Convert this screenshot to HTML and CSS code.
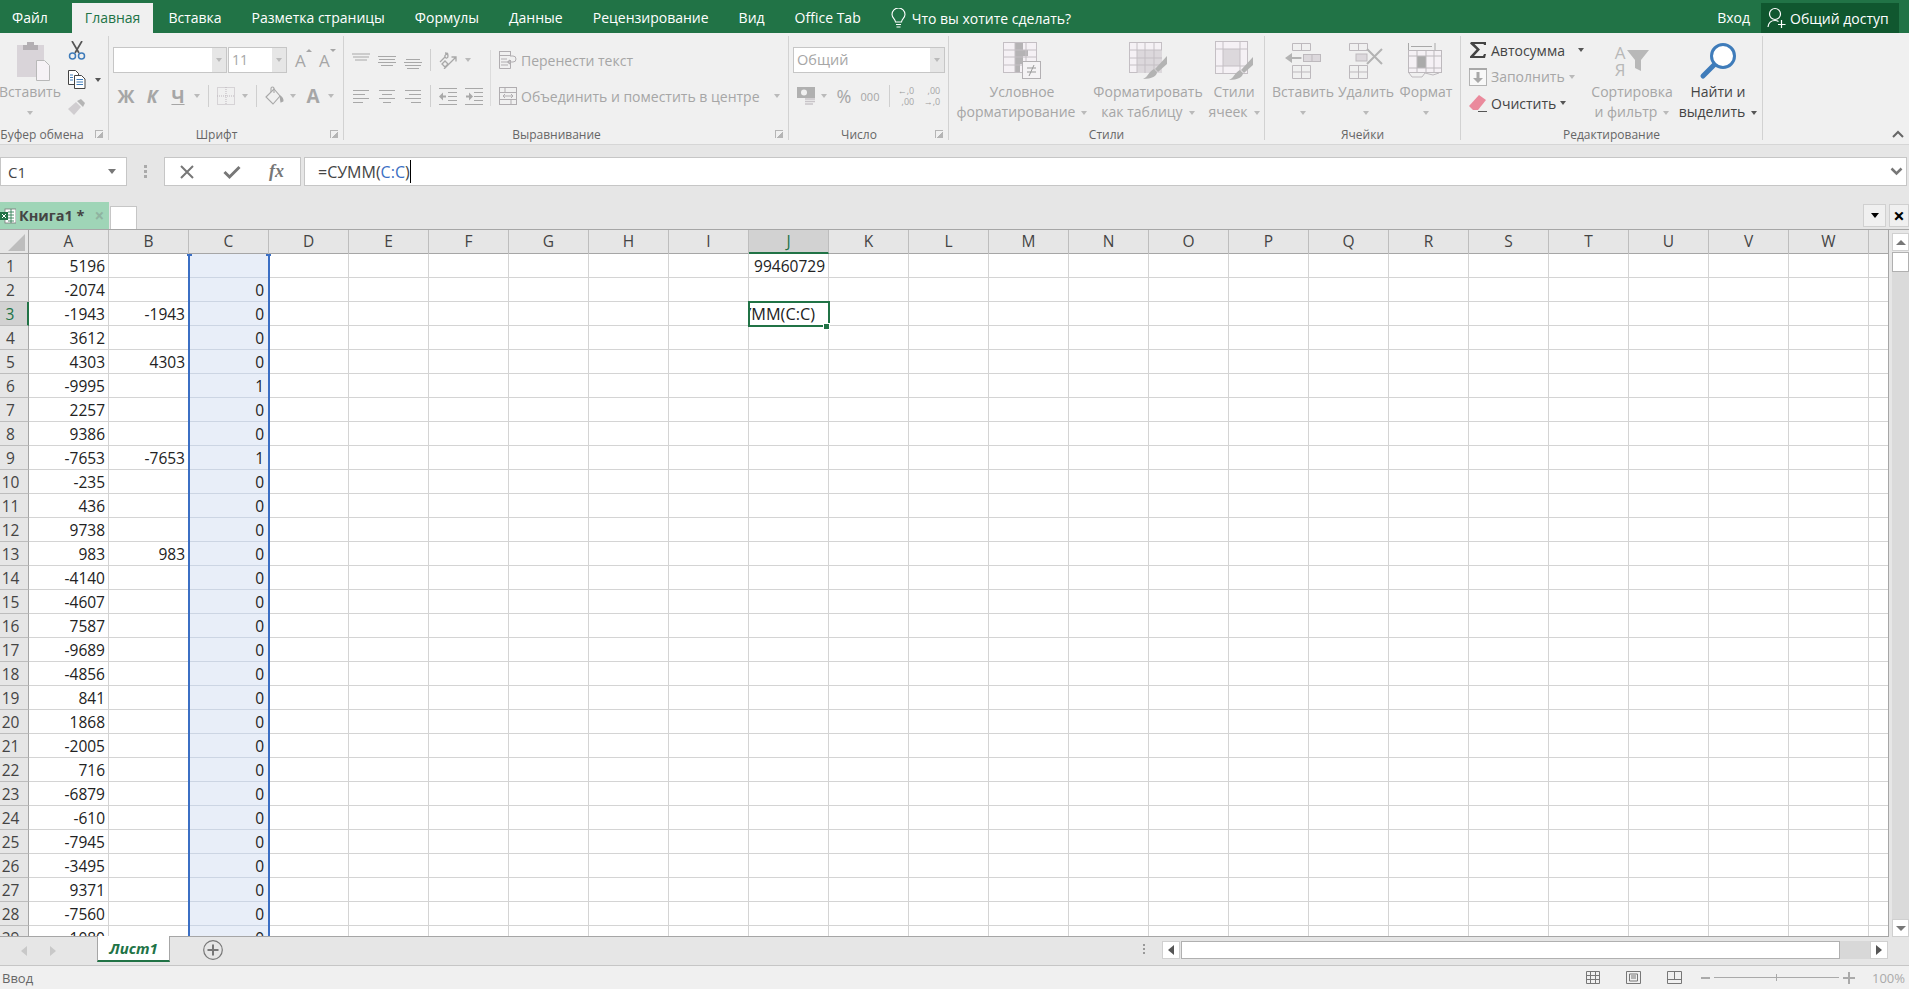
FILE: index.html
```
<!DOCTYPE html>
<html>
<head>
	<meta charset="utf-8">
	<title>Книга1 - Excel</title>
	<link rel="stylesheet" href="styles.css">
</head>
<body>
	<div class="titlebar">
		<div class="tab tab-file">Файл</div>
		<div class="tab tab-on">Главная</div>
		<div class="tab">Вставка</div>
		<div class="tab">Разметка страницы</div>
		<div class="tab">Формулы</div>
		<div class="tab">Данные</div>
		<div class="tab">Рецензирование</div>
		<div class="tab">Вид</div>
		<div class="tab">Office Tab</div>
		<div class="tellme">
			<svg width="15" height="21" viewBox="0 0 15 21" fill="none" stroke="#fff" stroke-width="1.1"><path d="M4.5 14c0-3-3.500-4-3.500-7.500a6.500 6.500 0 0 1 13 0c0 3.500-3.500 4.500-3.500 7.500z"/><path d="M5 16.500h5M5.500 19h4"/></svg>
			<span>Что вы хотите сделать?</span>
		</div>
		<div class="login">Вход</div>
		<div class="share">
			<svg width="19" height="22" viewBox="0 0 19 22" fill="none" stroke="#fff" stroke-width="1.2"><circle cx="8" cy="7" r="5.500"/><path d="M1 20c.5-4 3-6.500 7-6.500 1.500 0 2.500.3 3.500 1M14.500 13v8M11 17.500h7.500"/></svg>
			<span>Общий доступ</span>
		</div>
	</div>

	<div class="ribbon">
		<div class="group g-clip">
			<div class="group-body">
				<div class="big big-paste">
					<div class="big-ico">
						<svg width="34" height="40" viewBox="0 0 34 40"><rect y="4" width="27" height="32" fill="#d9d4d9"/><path d="M6 4h4V1h7v3h4v5H6z" fill="#b3afb3"/><path d="M19.500 19.500h8l5 5v15h-13z" fill="#f6f2f6" stroke="#b8b8b8"/></svg>
					</div>
					<div class="big-txt">Вставить</div>
					<div class="big-txt"><span class="arr"></span></div>
				</div>
				<div class="clip-col">
					<svg width="18" height="19" viewBox="0 0 18 19" fill="none"><path d="M4 0l7 12M14 0L7 12" stroke="#555" stroke-width="1.700"/><circle cx="4.500" cy="15" r="3" stroke="#3f7cba" stroke-width="1.500"/><circle cx="13.500" cy="15" r="3" stroke="#3f7cba" stroke-width="1.500"/></svg>
					<div class="clip-copy">
						<svg width="18" height="19" viewBox="0 0 18 19"><path d="M.5.500h7l3 3v11H.5z" fill="#fff" stroke="#444"/><path d="M6.500 5.500h7l3.500 3.500v9.500H6.500z" fill="#fff" stroke="#444"/><path d="M2 5h3M2 7.500h3M2 10h3M8.500 9.500h6.500M8.500 12h6.500M8.500 14.500h6.500" stroke="#3f7cba"/></svg>
						<span class="arr arr-dark"></span>
					</div>
					<svg width="18" height="17" viewBox="0 0 18 17"><path d="M0 10l8-7 5 5-7 8z" fill="#d0cdd0"/><path d="M9 2l4-2 4 4-2 4z" fill="#b5b5b5"/></svg>
				</div>
			</div>
			<div class="group-label">Буфер обмена<span class="launch"></span></div>
		</div>

		<div class="group g-font">
			<div class="group-body col">
				<div class="r1 font-r1">
					<div class="combo combo-name"><span class="combo-txt"></span><span class="combo-drop"><span class="arr"></span></span></div>
					<div class="combo combo-size"><span class="combo-txt">11</span><span class="combo-drop"><span class="arr"></span></span></div>
					<div class="grow-a">A<span class="up"></span></div>
					<div class="grow-a">A<span class="down"></span></div>
				</div>
				<div class="r2 font-r2">
					<b class="fmt">Ж</b>
					<b class="fmt fmt-i">К</b>
					<b class="fmt fmt-u">Ч</b>
					<span class="arr"></span>
					<span class="vsep"></span>
					<svg width="18" height="18" viewBox="0 0 18 18" fill="none" stroke="#bdb7bd" stroke-dasharray="1 1"><rect x=".5" y=".5" width="17" height="17"/><path d="M9 0v18M0 9h18"/></svg>
					<span class="arr"></span>
					<span class="vsep"></span>
					<svg width="20" height="20" viewBox="0 0 20 20" fill="none" stroke="#a8a8a8" stroke-width="1.100"><path d="M1 11l8-8 6 7-7 8z"/><path d="M6 6V2.500a1.500 1.500 0 0 1 3 0V7"/><path d="M15 10c2 1 3 3 3 5l-2 1z" fill="#a8a8a8"/></svg>
					<span class="arr"></span>
					<b class="fmt fmt-a">A</b>
					<span class="arr"></span>
				</div>
			</div>
			<div class="group-label">Шрифт<span class="launch"></span></div>
		</div>

		<div class="group g-align">
			<div class="group-body">
				<div class="align-left">
					<div class="r1 tools">
						<svg class="ic" viewBox="0 0 18 18"><path d="M0 3h18M1 6h16M3 9h12" stroke="#a8a8a8"/></svg>
						<svg class="ic" viewBox="0 0 18 18"><path d="M0 5.500h18M1 8.500h16M0 11.500h18M3 14.500h12" stroke="#a8a8a8"/></svg>
						<svg class="ic" viewBox="0 0 18 18"><path d="M2 8.500h14M0 11.500h18M1 14.500h16M3 17.500h12" stroke="#a8a8a8"/></svg>
						<span class="vsep"></span>
						<svg class="ic" viewBox="0 0 18 18" fill="none" stroke="#a8a8a8" stroke-width="1.300"><path d="M1 11l5-5M3 13l3-3 3 3-3 3zM6 2c2 0 3 1 3 3s-2 3-3 1 2-3 3-4"/><path d="M5 18L17 6M12.500 6H17v4.500"/></svg>
						<span class="arr"></span>
					</div>
					<div class="r2 tools">
						<svg class="ic" viewBox="0 0 18 18"><path d="M1 3.500h16M1 7.500h12M1 11.500h16M1 15.500h10" stroke="#a8a8a8"/></svg>
						<svg class="ic" viewBox="0 0 18 18"><path d="M1 3.500h16M4 7.500h10M1 11.500h16M5 15.500h8" stroke="#a8a8a8"/></svg>
						<svg class="ic" viewBox="0 0 18 18"><path d="M1 3.500h16M5 7.500h12M1 11.500h16M7 15.500h10" stroke="#a8a8a8"/></svg>
						<span class="vsep"></span>
						<svg class="ic" viewBox="0 0 18 18"><path d="M0 1.500h18M9 5.500h9M9 9.500h9M9 13.500h9M0 17.500h18" stroke="#a8a8a8"/><path d="M0 9.500l4-4v3h3v2H4v3z" fill="#a8a8a8"/></svg>
						<svg class="ic" viewBox="0 0 18 18"><path d="M0 1.500h18M9 5.500h9M9 9.500h9M9 13.500h9M0 17.500h18" stroke="#a8a8a8"/><path d="M8 9.500l-4-4v3H1v2h3v3z" fill="#a8a8a8"/></svg>
					</div>
				</div>
				<div class="align-right">
					<div class="r1 txt-tool">
						<svg class="ic" viewBox="0 0 18 18" fill="none" stroke="#b0adb0"><rect x=".5" y=".5" width="11" height="4"/><path d="M.5 4.500v13h11V9M2 8h6M2 11h7M2 14h7M11 5h3a3 3 0 0 1 0 6h-4"/><path d="M11 9l-2 2 2 2" stroke-width="1.400"/></svg>
						<span>Перенести текст</span>
					</div>
					<div class="r2 txt-tool">
						<svg class="ic" viewBox="0 0 18 18" fill="none" stroke="#b0adb0"><rect x=".5" y=".5" width="17" height="17"/><path d="M0 5.500h18M0 12.500h18M6 .5v5M12 12.500v5M4 9h10M6 7L4 9l2 2M12 7l2 2-2 2"/></svg>
						<span>Объединить и поместить в центре</span>
						<span class="arr arr-merge"></span>
					</div>
				</div>
			</div>
			<div class="group-label">Выравнивание<span class="launch"></span></div>
		</div>

		<div class="group g-num">
			<div class="group-body col">
				<div class="r1 num-r1">
					<div class="combo combo-num"><span class="combo-txt">Общий</span><span class="combo-drop"><span class="arr"></span></span></div>
				</div>
				<div class="r2 num-r2">
					<svg width="20" height="20" viewBox="0 0 20 20"><rect x="1" y="1" width="18" height="11" fill="#b0b0b0"/><circle cx="8" cy="6.500" r="3" fill="#f0f0f0"/><path d="M9 13h10M9 15.500h10M9 18h8" stroke="#c8c4c8" stroke-width="1.500"/></svg>
					<span class="arr"></span>
					<span class="pct">%</span>
					<span class="thou">000</span>
					<span class="vsep"></span>
					<span class="dec"><span><i>←</i>,0</span><span>,00</span></span>
					<span class="dec"><span>,00</span><span><i>→</i>,0</span></span>
				</div>
			</div>
			<div class="group-label">Число<span class="launch"></span></div>
		</div>

		<div class="group g-styles">
			<div class="group-body">
				<div class="big big-cf">
					<div class="big-ico">
						<svg width="38" height="37" viewBox="0 0 38 37" fill="none"><rect x=".5" y=".5" width="33" height="30" fill="#f5f1f5" stroke="#c4bfc4"/><path d="M12 1h8v7h5v6h-5v8h-3v8h-5z" fill="#b5b3b5"/><path d="M0 8h34M0 15h34M0 23h34M12 0v31M23 0v31" stroke="#c4bfc4"/><rect x="19.500" y="19.500" width="18" height="17" fill="#f5f3f5" stroke="#b3b0b3"/><path d="M24 26h9M24 30h9M31 23l-5 11" stroke="#999"/></svg>
					</div>
					<div class="big-txt">Условное</div>
					<div class="big-txt">форматирование<span class="arr arr-in"></span></div>
				</div>
				<div class="big big-ft">
					<div class="big-ico">
						<svg width="38" height="37" viewBox="0 0 38 37" fill="none"><rect x=".5" y=".5" width="32" height="30" fill="#f5f1f5" stroke="#c4bfc4"/><rect x="8" y="8" width="25" height="23" fill="#dcd8dc"/><path d="M0 8h33M0 16h33M0 23h33M8 0v31M16 0v31M25 0v31" stroke="#c4bfc4"/><path d="M38 14v8l-9 8-3-3z" fill="#b3b3b3"/><path d="M25 27l3 3c0 4-5 7-14 7 5-2 6-8 11-10z" fill="#b3b3b3"/></svg>
					</div>
					<div class="big-txt">Форматировать</div>
					<div class="big-txt">как таблицу<span class="arr arr-in"></span></div>
				</div>
				<div class="big big-cs">
					<div class="big-ico">
						<svg width="38" height="39" viewBox="0 0 38 39" fill="none"><rect x=".5" y=".5" width="32" height="32" fill="#f5f1f5" stroke="#c4bfc4"/><rect x="8" y="8" width="17" height="17" fill="#dcd8dc"/><path d="M0 8h33M0 25h33M8 0v33M25 0v33" stroke="#c4bfc4"/><path d="M38 16v8l-9 8-3-3z" fill="#b3b3b3"/><path d="M25 29l3 3c0 4-5 7-14 7 5-2 6-8 11-10z" fill="#b3b3b3"/></svg>
					</div>
					<div class="big-txt">Стили</div>
					<div class="big-txt">ячеек<span class="arr arr-in"></span></div>
				</div>
			</div>
			<div class="group-label">Стили</div>
		</div>

		<div class="group g-cells">
			<div class="group-body">
				<div class="big big-c1">
					<div class="big-ico">
						<svg width="36" height="36" viewBox="0 0 36 36" fill="none"><path d="M7.500.5h18v7h-18zM16.500.5v7M7.500 22.500h18v13h-18zM7.500 29h18M16.500 22.500v13" stroke="#bdb9bd"/><rect x="18.500" y="11.500" width="17" height="7" fill="#dcd8dc" stroke="#bdb9bd"/><path d="M27 11v8M3 15h14" stroke="#bdb9bd"/><path d="M0 15l7-5v10z" fill="#b3b3b3"/><path d="M4 14h12v2H4z" fill="#b3b3b3"/></svg>
					</div>
					<div class="big-txt">Вставить</div>
					<div class="big-txt"><span class="arr"></span></div>
				</div>
				<div class="big big-c2">
					<div class="big-ico">
						<svg width="36" height="36" viewBox="0 0 36 36" fill="none"><path d="M1.500.5h18v7h-18zM10.500.5v7M1.500 22.500h18v13h-18zM1.500 29h18M10.500 22.500v13" stroke="#bdb9bd"/><rect x="8" y="11" width="11" height="7" fill="#dcd8dc" stroke="#bdb9bd"/><path d="M19 6l15 15M34 6L19 21" stroke="#b3b3b3" stroke-width="2"/></svg>
					</div>
					<div class="big-txt">Удалить</div>
					<div class="big-txt"><span class="arr"></span></div>
				</div>
				<div class="big big-c3">
					<div class="big-ico">
						<svg width="36" height="36" viewBox="0 0 36 36" fill="none"><path d="M.5 0v7M27 0v7M3 3.500h21" stroke="#a8a8a8"/><rect x=".5" y="7.500" width="33" height="22" fill="#f5f1f5" stroke="#bdb9bd"/><rect x="9" y="13" width="9" height="12" fill="#aaa"/><path d="M0 13h34M0 25h34M9 7v23M18 7v23M26 7v23M1 30l3 4h10l3-4 8 2 6-2" stroke="#bdb9bd"/></svg>
					</div>
					<div class="big-txt">Формат</div>
					<div class="big-txt"><span class="arr"></span></div>
				</div>
			</div>
			<div class="group-label">Ячейки</div>
		</div>

		<div class="group g-edit">
			<div class="group-body">
				<div class="edit-col">
					<div class="edit-row on">
						<svg class="ic" viewBox="0 0 18 18"><path d="M2 1h15v3h-2l-.5-1H5.500L11 8.500 5 15h9l1-2h2l-1 4H1v-1.500l6.500-7L1 2.500z" fill="#444"/></svg>
						<span>Автосумма</span><span class="arr arr-dark arr-sum"></span>
					</div>
					<div class="edit-row">
						<svg class="ic" viewBox="0 0 18 18"><rect x=".5" y=".5" width="17" height="17" fill="#f8f8f8" stroke="#b3b3b3"/><path d="M0 1h18" stroke="#a8a8a8" stroke-width="2"/><path d="M7.500 4h3v6H14l-5 5-5-5h3.500z" fill="#a8a8a8"/></svg>
						<span>Заполнить</span><span class="arr"></span>
					</div>
					<div class="edit-row on">
						<svg class="ic" viewBox="0 0 18 18"><path d="M0 12L10 1l7 5-8 10H4z" fill="#ea8a9c"/><path d="M9 17.500h9" stroke="#555"/></svg>
						<span>Очистить</span><span class="arr arr-dark"></span>
					</div>
				</div>
				<div class="big big-sort">
					<div class="big-ico">
						<div class="sort-ico">
							<div class="sort-letters"><span>А</span><span>Я</span></div>
							<svg width="22" height="21" viewBox="0 0 22 21"><path d="M0 0h22l-8 10v11l-6-3v-8z" fill="#b8b8b8"/></svg>
						</div>
					</div>
					<div class="big-txt">Сортировка</div>
					<div class="big-txt">и фильтр<span class="arr arr-in"></span></div>
				</div>
				<div class="big big-find on">
					<div class="big-ico">
						<svg width="38" height="38" viewBox="0 0 38 38" fill="none"><circle cx="24" cy="14" r="11.500" fill="#fff" stroke="#3f7cba" stroke-width="3"/><path d="M15 23L4 34" stroke="#3f7cba" stroke-width="5" stroke-linecap="round"/></svg>
					</div>
					<div class="big-txt">Найти и</div>
					<div class="big-txt">выделить<span class="arr arr-dark arr-in"></span></div>
				</div>
			</div>
			<div class="group-label">Редактирование</div>
		</div>

		<div class="collapse">
			<svg width="12" height="8" viewBox="0 0 12 8" fill="none" stroke="#666" stroke-width="2"><path d="M1 7l5-5 5 5"/></svg>
		</div>
	</div>

	<div class="formulabar">
		<div class="namebox"><span>C1</span><span class="arr arr-name"></span></div>
		<div class="dots"><i></i><i></i><i></i></div>
		<div class="fx-btns">
			<svg width="16" height="16" viewBox="0 0 16 16" fill="none" stroke="#777" stroke-width="2"><path d="M2 2l12 12M14 2L2 14"/></svg>
			<svg width="18" height="16" viewBox="0 0 18 16" fill="none" stroke="#777" stroke-width="3"><path d="M1.500 8l5 5L16.500 3"/></svg>
			<span class="fx-label">fx</span>
		</div>
		<div class="fx-input">
			<span>=СУММ(<span class="ref">C:C</span>)</span><span class="caret"></span>
			<svg class="fx-chev" width="13" height="9" viewBox="0 0 13 9" fill="none" stroke="#777" stroke-width="2.500"><path d="M1.500 1.500l5 5 5-5"/></svg>
		</div>
	</div>

	<div class="booktabs">
		<div class="book">
			<svg width="16" height="16" viewBox="0 0 16 16"><rect x="5" y="1" width="11" height="14" fill="#fff" stroke="#777" stroke-width=".8"/><path d="M8 4h6M8 7h6M8 10h6M8 13h6M11 1v14" stroke="#217346" stroke-width=".8"/><rect y="4" width="8" height="8" fill="#217346"/><path d="M2 6l4 4M6 6l-4 4" stroke="#fff"/></svg>
			<span class="book-name">Книга1 *</span>
			<span class="book-x">×</span>
		</div>
		<div class="book-new"></div>
		<div class="book-tools">
			<div class="book-btn"><span class="arr arr-black"></span></div>
			<div class="book-btn book-close">×</div>
		</div>
	</div>

	<div class="sheetarea">
		<div class="grid">
			<div class="head">
				<div class="corner"><svg width="17" height="17" viewBox="0 0 17 17"><path d="M17 0v17H0z" fill="#bdbdbd"/></svg></div>
				<div class="hc">A</div><div class="hc">B</div><div class="hc">C</div><div class="hc">D</div><div class="hc">E</div><div class="hc">F</div><div class="hc">G</div><div class="hc">H</div><div class="hc">I</div><div class="hc hc-on">J</div><div class="hc">K</div><div class="hc">L</div><div class="hc">M</div><div class="hc">N</div><div class="hc">O</div><div class="hc">P</div><div class="hc">Q</div><div class="hc">R</div><div class="hc">S</div><div class="hc">T</div><div class="hc">U</div><div class="hc">V</div><div class="hc">W</div><div class="hc"></div>
			</div>
			<div class="rows">
				<div class="row"><div class="rh">1</div><div class="c">5196</div><div class="c"></div><div class="c cs cs-top"></div><div class="c cj">99460729</div></div>
				<div class="row"><div class="rh">2</div><div class="c">-2074</div><div class="c"></div><div class="c cs">0</div></div>
				<div class="row"><div class="rh rh-on">3</div><div class="c">-1943</div><div class="c">-1943</div><div class="c cs">0</div><div class="c cj active"><span>=СУММ(C:C)</span></div></div>
				<div class="row"><div class="rh">4</div><div class="c">3612</div><div class="c"></div><div class="c cs">0</div></div>
				<div class="row"><div class="rh">5</div><div class="c">4303</div><div class="c">4303</div><div class="c cs">0</div></div>
				<div class="row"><div class="rh">6</div><div class="c">-9995</div><div class="c"></div><div class="c cs">1</div></div>
				<div class="row"><div class="rh">7</div><div class="c">2257</div><div class="c"></div><div class="c cs">0</div></div>
				<div class="row"><div class="rh">8</div><div class="c">9386</div><div class="c"></div><div class="c cs">0</div></div>
				<div class="row"><div class="rh">9</div><div class="c">-7653</div><div class="c">-7653</div><div class="c cs">1</div></div>
				<div class="row"><div class="rh">10</div><div class="c">-235</div><div class="c"></div><div class="c cs">0</div></div>
				<div class="row"><div class="rh">11</div><div class="c">436</div><div class="c"></div><div class="c cs">0</div></div>
				<div class="row"><div class="rh">12</div><div class="c">9738</div><div class="c"></div><div class="c cs">0</div></div>
				<div class="row"><div class="rh">13</div><div class="c">983</div><div class="c">983</div><div class="c cs">0</div></div>
				<div class="row"><div class="rh">14</div><div class="c">-4140</div><div class="c"></div><div class="c cs">0</div></div>
				<div class="row"><div class="rh">15</div><div class="c">-4607</div><div class="c"></div><div class="c cs">0</div></div>
				<div class="row"><div class="rh">16</div><div class="c">7587</div><div class="c"></div><div class="c cs">0</div></div>
				<div class="row"><div class="rh">17</div><div class="c">-9689</div><div class="c"></div><div class="c cs">0</div></div>
				<div class="row"><div class="rh">18</div><div class="c">-4856</div><div class="c"></div><div class="c cs">0</div></div>
				<div class="row"><div class="rh">19</div><div class="c">841</div><div class="c"></div><div class="c cs">0</div></div>
				<div class="row"><div class="rh">20</div><div class="c">1868</div><div class="c"></div><div class="c cs">0</div></div>
				<div class="row"><div class="rh">21</div><div class="c">-2005</div><div class="c"></div><div class="c cs">0</div></div>
				<div class="row"><div class="rh">22</div><div class="c">716</div><div class="c"></div><div class="c cs">0</div></div>
				<div class="row"><div class="rh">23</div><div class="c">-6879</div><div class="c"></div><div class="c cs">0</div></div>
				<div class="row"><div class="rh">24</div><div class="c">-610</div><div class="c"></div><div class="c cs">0</div></div>
				<div class="row"><div class="rh">25</div><div class="c">-7945</div><div class="c"></div><div class="c cs">0</div></div>
				<div class="row"><div class="rh">26</div><div class="c">-3495</div><div class="c"></div><div class="c cs">0</div></div>
				<div class="row"><div class="rh">27</div><div class="c">9371</div><div class="c"></div><div class="c cs">0</div></div>
				<div class="row"><div class="rh">28</div><div class="c">-7560</div><div class="c"></div><div class="c cs">0</div></div>
				<div class="row"><div class="rh">29</div><div class="c">-1080</div><div class="c"></div><div class="c cs">0</div></div>
			</div>
		</div>
		<div class="vscroll">
			<div class="sb-btn"><span class="arr arr-up"></span></div>
			<div class="sb-thumb"></div>
			<div class="sb-track"></div>
			<div class="sb-btn"><span class="arr arr-gray"></span></div>
		</div>
	</div>

	<div class="sheetbar">
		<div class="sheet-nav">
			<svg width="6" height="10" viewBox="0 0 6 10"><path d="M6 0v10L0 5z" fill="#c8c8c8"/></svg>
			<svg width="6" height="10" viewBox="0 0 6 10"><path d="M0 0v10l6-5z" fill="#c8c8c8"/></svg>
		</div>
		<div class="sheet-tab">Лист1</div>
		<svg class="sheet-add" width="20" height="20" viewBox="0 0 20 20" fill="none" stroke="#777"><circle cx="10" cy="10" r="9.300" stroke-width="1.200"/><path d="M10 4.500v11M4.500 10h11" stroke-width="2"/></svg>
		<div class="dots dots-sm"><i></i><i></i><i></i></div>
		<div class="hscroll">
			<div class="hs-btn"><svg width="6" height="10" viewBox="0 0 6 10"><path d="M6 0v10L0 5z" fill="#555"/></svg></div>
			<div class="hs-thumb"></div>
			<div class="hs-track"></div>
			<div class="hs-btn"><svg width="6" height="10" viewBox="0 0 6 10"><path d="M0 0v10l6-5z" fill="#555"/></svg></div>
		</div>
	</div>

	<div class="statusbar">
		<span class="status-txt">Ввод</span>
		<div class="status-right">
			<svg width="14" height="13" viewBox="0 0 14 13" fill="none" stroke="#777"><path d="M.5.500h13v12H.5zM.5 4.500h13M.5 8.500h13M4.500.5v12M9.500.5v12"/></svg>
			<svg width="15" height="13" viewBox="0 0 15 13" fill="none" stroke="#777"><path d="M.5.500h14v12H.5zM3.500 3v7h8V3zM5 5h5M5 7h5"/></svg>
			<svg width="15" height="13" viewBox="0 0 15 13" fill="none" stroke="#777"><path d="M.5.500h14v12H.5zM7.500.5v8M.5 8.500h14"/></svg>
			<div class="zoomer">
				<span class="zoom-minus"></span>
				<span class="zoom-line"><i></i></span>
				<span class="zoom-plus"></span>
			</div>
			<span class="zoom-val">100%</span>
		</div>
	</div>
</body>
</html>
```

FILE: styles.css
```
* {
	box-sizing: border-box;
}
html, body {
	margin: 0;
	height: 989px;
	overflow: hidden;
}
body {
	width: 1909px;
	background-color: #e6e6e6;
	font-family: "Open Sans", "Noto Sans", sans-serif;
	font-size: 14px;
	color: #444;
	display: flex;
	flex-direction: column;
}
svg {
	display: block;
	flex: none;
}

/* small triangles used all over the ribbon */
.arr {
	display: inline-block;
	width: 0;
	height: 0;
	border-left: 3.5px solid transparent;
	border-right: 3.5px solid transparent;
	border-top: 4px solid #bababa;
	vertical-align: middle;
	flex: none;
}
.arr-dark {
	border-top-color: #555;
}
.arr-in {
	margin-left: 6px;
}

/* title bar */
.titlebar {
	height: 33px;
	flex: none;
	background-color: #217346;
	color: #fff;
	display: flex;
	align-items: flex-end;
}
.tab {
	height: 30px;
	line-height: 30px;
	padding: 0 15px;
	white-space: nowrap;
}
.tab-file {
	padding: 0 24px 0 12px;
}
.tab-on {
	background-color: #f0f0f0;
	color: #217346;
	padding: 0 13px;
}
.tellme {
	display: flex;
	align-items: center;
	gap: 6px;
	height: 30px;
	margin-left: 15px;
}
.login {
	margin-left: auto;
	height: 30px;
	line-height: 30px;
	margin-right: 11px;
}
.share {
	width: 138px;
	height: 30px;
	margin-right: 10px;
	padding-left: 6px;
	background-color: #10572f;
	display: flex;
	align-items: center;
	gap: 4px;
}

/* ribbon */
.ribbon {
	height: 111px;
	flex: none;
	background-color: #f0f0f0;
	display: flex;
	padding-top: 3px;
	font-size: 14px;
	color: #a6a6a6;
	position: relative;
}
.group {
	position: relative;
	display: flex;
	flex-direction: column;
	height: 104px;
	border-right: 1px solid #d2d2d2;
	flex: none;
}
.group-body {
	height: 91px;
	flex: none;
	display: flex;
}
.col {
	flex-direction: column;
}
.group-label {
	height: 14px;
	flex: none;
	line-height: 14px;
	margin-top: 1px;
	text-align: center;
	font-size: 12px;
	color: #666;
	white-space: nowrap;
}
.g-clip .group-label {
	padding-right: 24px;
}
.g-font .group-label, .g-align .group-label, .g-num .group-label {
	padding-right: 19px;
}
.launch {
	position: absolute;
	right: 5px;
	bottom: 2px;
	width: 8px;
	height: 8px;
	border-left: 1px solid #b5b5b5;
	border-top: 1px solid #b5b5b5;
	background: linear-gradient(135deg, transparent 55%, #b5b5b5 55%);
}
.g-clip {
	width: 109px;
}
.g-font {
	width: 235px;
}
.g-align {
	width: 445px;
}
.g-num {
	width: 160px;
}
.g-styles {
	width: 316px;
}
.g-cells {
	width: 196px;
}
.g-edit {
	width: 302px;
}
.ic {
	width: 18px;
	height: 18px;
}
.vsep {
	display: block;
	width: 1px;
	height: 22px;
	background-color: #cfcfcf;
}

/* big buttons: icon on top, two text lines below */
.big {
	display: flex;
	flex-direction: column;
	align-items: center;
	flex: none;
}
.big-ico {
	height: 46px;
	display: flex;
	align-items: center;
	justify-content: center;
	padding-top: 3px;
}
.big-txt {
	height: 20px;
	line-height: 20px;
	white-space: nowrap;
}
.on {
	color: #444;
}
.big-paste {
	width: 60px;
}
.big-paste .big-ico {
	padding-left: 8px;
}
.clip-col {
	margin-left: 8px;
	padding-top: 5px;
	display: flex;
	flex-direction: column;
	gap: 10px;
}
.clip-copy {
	display: flex;
	align-items: center;
	gap: 9px;
}

/* font group */
.r1 {
	height: 26px;
	margin-top: 11px;
	display: flex;
	align-items: center;
}
.r2 {
	height: 24px;
	margin-top: 11px;
	align-items: center;
}
.combo {
	height: 26px;
	border: 1px solid #c6c6c6;
	background-color: #fff;
	display: flex;
	flex: none;
}
.combo-txt {
	flex: 1;
	line-height: 24px;
	padding-left: 3px;
}
.combo-drop {
	width: 14px;
	background-color: #e6e6e6;
	display: flex;
	align-items: center;
	justify-content: center;
}
.font-r1 {
	padding-left: 4px;
}
.combo-name {
	width: 114px;
}
.combo-size {
	width: 59px;
	margin-left: 1px;
}
.grow-a {
	position: relative;
	width: 25px;
	margin-left: 8px;
	font-size: 17px;
	line-height: 20px;
	color: #a6a6a6;
	padding-top: 2px;
}
.grow-a:last-child {
	margin-left: 0;
}
.grow-a .up, .grow-a .down {
	position: absolute;
	right: 7px;
	top: 0;
	border-left: 3px solid transparent;
	border-right: 3px solid transparent;
}
.grow-a .up {
	border-bottom: 3px solid #a6a6a6;
}
.grow-a .down {
	border-top: 3px solid #a6a6a6;
}
.font-r2 {
	display: grid;
	padding-left: 4px;
	grid-template-columns: 26px 26px 26px 12px 10px 26px 12px 10px 27px 10px 30px 6px;
	justify-items: center;
}
.fmt {
	font-size: 18px;
	line-height: 24px;
	color: #a6a6a6;
}
.fmt-i {
	font-style: italic;
}
.fmt-u {
	text-decoration: underline;
}
.fmt-a {
	font-size: 19px;
}

/* alignment group */
.align-left {
	width: 147px;
	border-right: 1px solid #dcdcdc;
	height: 56px;
	margin-top: 14px;
}
.align-left .r1 {
	margin-top: -3px;
}
.tools {
	display: flex;
	align-items: center;
	gap: 8px;
	padding-left: 8px;
}
.align-right {
	padding-left: 8px;
}
.txt-tool {
	display: flex;
	align-items: center;
	gap: 4px;
	white-space: nowrap;
	font-size: 14px;
}
.arr-merge {
	margin-left: 10px;
}

/* number group */
.num-r1 {
	padding-left: 4px;
}
.combo-num {
	width: 152px;
	font-size: 14.5px;
}
.num-r2 {
	display: grid;
	padding-left: 6px;
	grid-template-columns: 21px 16px 24px 28px 10px 24px 28px;
	justify-items: center;
}
.pct {
	font-size: 18px;
}
.thou {
	font-size: 11px;
}
.dec {
	display: flex;
	flex-direction: column;
	align-items: flex-end;
	font-size: 9px;
	line-height: 11px;
}
.dec i {
	font-style: normal;
	color: #999;
}

/* styles, cells, editing */
.g-styles .group-body {
	padding-left: 6px;
}
.big-cf {
	width: 134px;
}
.big-ft {
	width: 110px;
	margin-left: 4px;
}
.big-cs {
	width: 54px;
	margin-left: 4px;
}
.g-cells .group-body {
	padding-left: 7px;
}
.big-c1 {
	width: 62px;
}
.big-c2 {
	width: 60px;
	margin-left: 2px;
}
.big-c3 {
	width: 60px;
}
.edit-col {
	width: 130px;
	padding-left: 8px;
	padding-top: 1px;
}
.edit-row {
	height: 26.500px;
	display: flex;
	align-items: center;
	gap: 4px;
	white-space: nowrap;
}
.arr-sum {
	margin-left: 9px;
}
.big-sort {
	width: 82px;
}
.big-find {
	width: 80px;
	margin-left: 5px;
}
.sort-ico {
	display: flex;
	align-items: center;
	gap: 2px;
}
.sort-letters {
	display: flex;
	flex-direction: column;
	font-size: 17px;
	line-height: 17px;
	color: #b8b8b8;
}
.collapse {
	position: absolute;
	right: 5px;
	bottom: 6px;
}

/* formula bar */
.formulabar {
	height: 58px;
	flex: none;
	border-top: 1px solid #d6d6d6;
	padding-top: 12px;
	display: flex;
	align-items: flex-start;
	font-size: 15px;
}
.namebox {
	width: 127px;
	height: 29px;
	background-color: #fff;
	border: 1px solid #c6c6c6;
	display: flex;
	align-items: center;
	justify-content: space-between;
	padding: 0 10px 0 7px;
}
.arr-name {
	border-left-width: 4px;
	border-right-width: 4px;
	border-top: 5px solid #777;
}
.dots {
	width: 37px;
	padding-top: 8px;
	display: flex;
	flex-direction: column;
	align-items: center;
	gap: 2px;
}
.dots i {
	width: 3px;
	height: 3px;
	background-color: #aaa;
}
.fx-btns {
	width: 137px;
	height: 29px;
	background-color: #fff;
	border: 1px solid #c6c6c6;
	display: flex;
	align-items: center;
	gap: 28px;
	padding-left: 14px;
}
.fx-label {
	font-family: "Liberation Serif", serif;
	font-style: italic;
	font-weight: bold;
	font-size: 18px;
	color: #777;
}
.fx-input {
	width: 1603px;
	height: 29px;
	margin-left: 3px;
	background-color: #fff;
	border: 1px solid #c6c6c6;
	display: flex;
	align-items: center;
	padding-left: 13px;
	position: relative;
	font-size: 16px;
}
.ref {
	color: #3b6fc4;
}
.caret {
	width: 1px;
	height: 23px;
	background-color: #000;
}
.fx-chev {
	position: absolute;
	right: 3px;
	top: 9px;
}

/* workbook tabs */
.booktabs {
	height: 27px;
	flex: none;
	display: flex;
	position: relative;
}
.book {
	width: 109px;
	background-color: #9fd5b7;
	display: flex;
	align-items: center;
	font-size: 14.500px;
}
.book-name {
	font-weight: bold;
	margin-left: 3px;
	white-space: nowrap;
}
.book-x {
	margin-left: 10px;
	font-size: 17px;
	font-weight: bold;
	color: #8fb3a0;
}
.book-new {
	width: 27px;
	height: 23px;
	margin: 4px 0 0 1px;
	background-color: #fff;
	border: 1px solid #c6c6c6;
	border-bottom: none;
}
.book-tools {
	margin-left: auto;
	padding-top: 2px;
	display: flex;
	gap: 3px;
}
.book-btn {
	width: 23px;
	height: 23px;
	background-color: #f0f0f0;
	border: 1px solid #d0d0d0;
	display: flex;
	align-items: center;
	justify-content: center;
	color: #000;
	font-weight: bold;
	font-size: 20px;
	line-height: 20px;
}
.book-close {
	width: 20px;
}
.arr-black {
	border-top: 5px solid #000;
	border-left-width: 4px;
	border-right-width: 4px;
}

/* sheet */
.sheetarea {
	height: 708px;
	flex: none;
	display: flex;
	border-top: 1px solid #a6a6a6;
}
.grid {
	width: 1889px;
	border-right: 1px solid #a6a6a6;
	border-bottom: 1px solid #a6a6a6;
	overflow: hidden;
	font-size: 15.500px;
	color: #222;
}
.head {
	height: 24px;
	display: grid;
	grid-template-columns: 29px repeat(24, 80px);
	border-bottom: 1px solid #a6a6a6;
	color: #444;
	width: 1949px;
}
.corner {
	border-right: 1px solid #a6a6a6;
	display: flex;
	align-items: flex-end;
	justify-content: flex-end;
	padding: 0 3px 3px 0;
}
.hc {
	text-align: center;
	line-height: 22px;
	border-right: 1px solid #bdbdbd;
}
.hc-on {
	background-color: #d2d2d2;
	color: #217346;
	border-bottom: 2px solid #217346;
	height: 24px;
	line-height: 22px;
}
.rows {
	overflow: hidden;
	height: 682px;
	background-color: #fff;
}
.row {
	height: 24px;
	width: 1949px;
	display: grid;
	grid-template-columns: 29px repeat(24, 80px);
	grid-template-rows: 23px;
	border-bottom: 1px solid #d4d4d4;
	background: linear-gradient(to left, #d4d4d4 1px, transparent 1px) 29px 0 / 80px 100% repeat-x;
}
.rh {
	background-color: #e6e6e6;
	border-right: 1px solid #a6a6a6;
	border-bottom: 1px solid #bdbdbd;
	height: 24px;
	text-align: center;
	padding-right: 7px;
	line-height: 24px;
	color: #444;
}
.rh-on {
	background-color: #d2d2d2;
	color: #217346;
	border-right: 2px solid #217346;
}
.c {
	text-align: right;
	padding-right: 4px;
	line-height: 25px;
	white-space: nowrap;
}
.cs {
	position: relative;
	margin: 0 -1px 0 -1px;
	height: 24px;
	background: linear-gradient(#e8eef8 23px, #ccd5e3 23px);
	border-left: 2px solid #3b6fc4;
	border-right: 2px solid #3b6fc4;
	padding-right: 4px;
}
.cs-top::before, .cs-top::after {
	content: "";
	position: absolute;
	top: 0;
	width: 5px;
	height: 2px;
	background-color: #3b6fc4;
}
.cs-top::before {
	left: -3px;
}
.cs-top::after {
	right: -3px;
}
.cj {
	grid-column: 11;
	grid-row: 1;
}
.active {
	position: relative;
	display: flex;
	justify-content: flex-end;
	overflow: hidden;
	padding-right: 13px;
	margin: -1px 0 0 -1px;
	height: 26px;
	width: 82px;
	border: 2px solid #217346;
	font-size: 16.300px;
	line-height: 22px;
	background-color: #fff;
	z-index: 1;
}
.row:has(.active)::after {
	content: "";
	grid-row: 1;
	grid-column: 11;
	justify-self: end;
	align-self: start;
	width: 5px;
	height: 5px;
	margin: 21px -1px 0 0;
	background-color: #217346;
	border: 1px solid #fff;
	z-index: 2;
}

/* vertical scrollbar */
.vscroll {
	width: 17px;
	margin-left: 3px;
	padding-top: 3px;
	display: flex;
	flex-direction: column;
}
.sb-btn {
	height: 18px;
	background-color: #fff;
	border: 1px solid #d0d0d0;
	display: flex;
	align-items: center;
	justify-content: center;
	flex: none;
}
.sb-thumb {
	height: 20px;
	margin-top: 1px;
	background-color: #fff;
	border: 1px solid #b0b0b0;
	flex: none;
}
.sb-track {
	flex: 1;
	background-color: #dadada;
}
.arr-up {
	border-top: none;
	border-bottom: 5px solid #777;
	border-left-width: 5px;
	border-right-width: 5px;
}
.arr-gray {
	border-top: 5px solid #777;
	border-left-width: 5px;
	border-right-width: 5px;
}

/* sheet tabs row */
.sheetbar {
	height: 29px;
	flex: none;
	border-bottom: 1px solid #c6c6c6;
	display: flex;
	align-items: flex-start;
	position: relative;
}
.sheet-nav {
	width: 97px;
	height: 27px;
	padding-left: 21px;
	display: flex;
	align-items: center;
	gap: 23px;
}
.sheet-tab {
	width: 73px;
	height: 26px;
	margin-top: -1px;
	background-color: #fff;
	border-left: 1px solid #a6a6a6;
	border-right: 1px solid #a6a6a6;
	border-bottom: 2px solid #217346;
	color: #217346;
	font-weight: bold;
	font-style: italic;
	text-align: center;
	line-height: 24px;
	font-size: 15px;
}
.sheet-add {
	margin: 3px 0 0 33px;
}
.dots-sm {
	position: absolute;
	left: 1142px;
	top: 0;
	width: 3px;
	padding-top: 7px;
}
.dots-sm i {
	background-color: #999;
	width: 2px;
	height: 2px;
}
.hscroll {
	position: absolute;
	left: 1162px;
	top: 4px;
	width: 726px;
	height: 18px;
	display: flex;
}
.hs-btn {
	width: 18px;
	background-color: #fff;
	border: 1px solid #d0d0d0;
	display: flex;
	align-items: center;
	justify-content: center;
	flex: none;
}
.hs-thumb {
	width: 659px;
	margin-left: 1px;
	background-color: #fff;
	border: 1px solid #b0b0b0;
}
.hs-track {
	flex: 1;
	background-color: #d8d8d8;
}

/* status bar */
.statusbar {
	height: 23px;
	flex: none;
	background-color: #f0f0f0;
	display: flex;
	align-items: center;
	padding-left: 2px;
	font-size: 13px;
	color: #666;
}
.status-right {
	margin-left: auto;
	display: flex;
	align-items: center;
	padding-right: 4px;
}
.status-right svg + svg {
	margin-left: 26px;
}
.zoomer {
	display: flex;
	align-items: center;
	margin-left: 19px;
	gap: 4px;
}
.zoom-minus {
	width: 9px;
	height: 2px;
	background-color: #aaa;
}
.zoom-line {
	position: relative;
	width: 125px;
	height: 1px;
	background-color: #aaa;
}
.zoom-line i {
	position: absolute;
	left: 62px;
	top: -3px;
	width: 1px;
	height: 7px;
	background-color: #aaa;
}
.zoom-plus {
	width: 12px;
	height: 12px;
	background:
		linear-gradient(#aaa, #aaa) center / 12px 2px no-repeat,
		linear-gradient(#aaa, #aaa) center / 2px 12px no-repeat;
}
.zoom-val {
	margin-left: 17px;
	color: #aaa;
}
```
